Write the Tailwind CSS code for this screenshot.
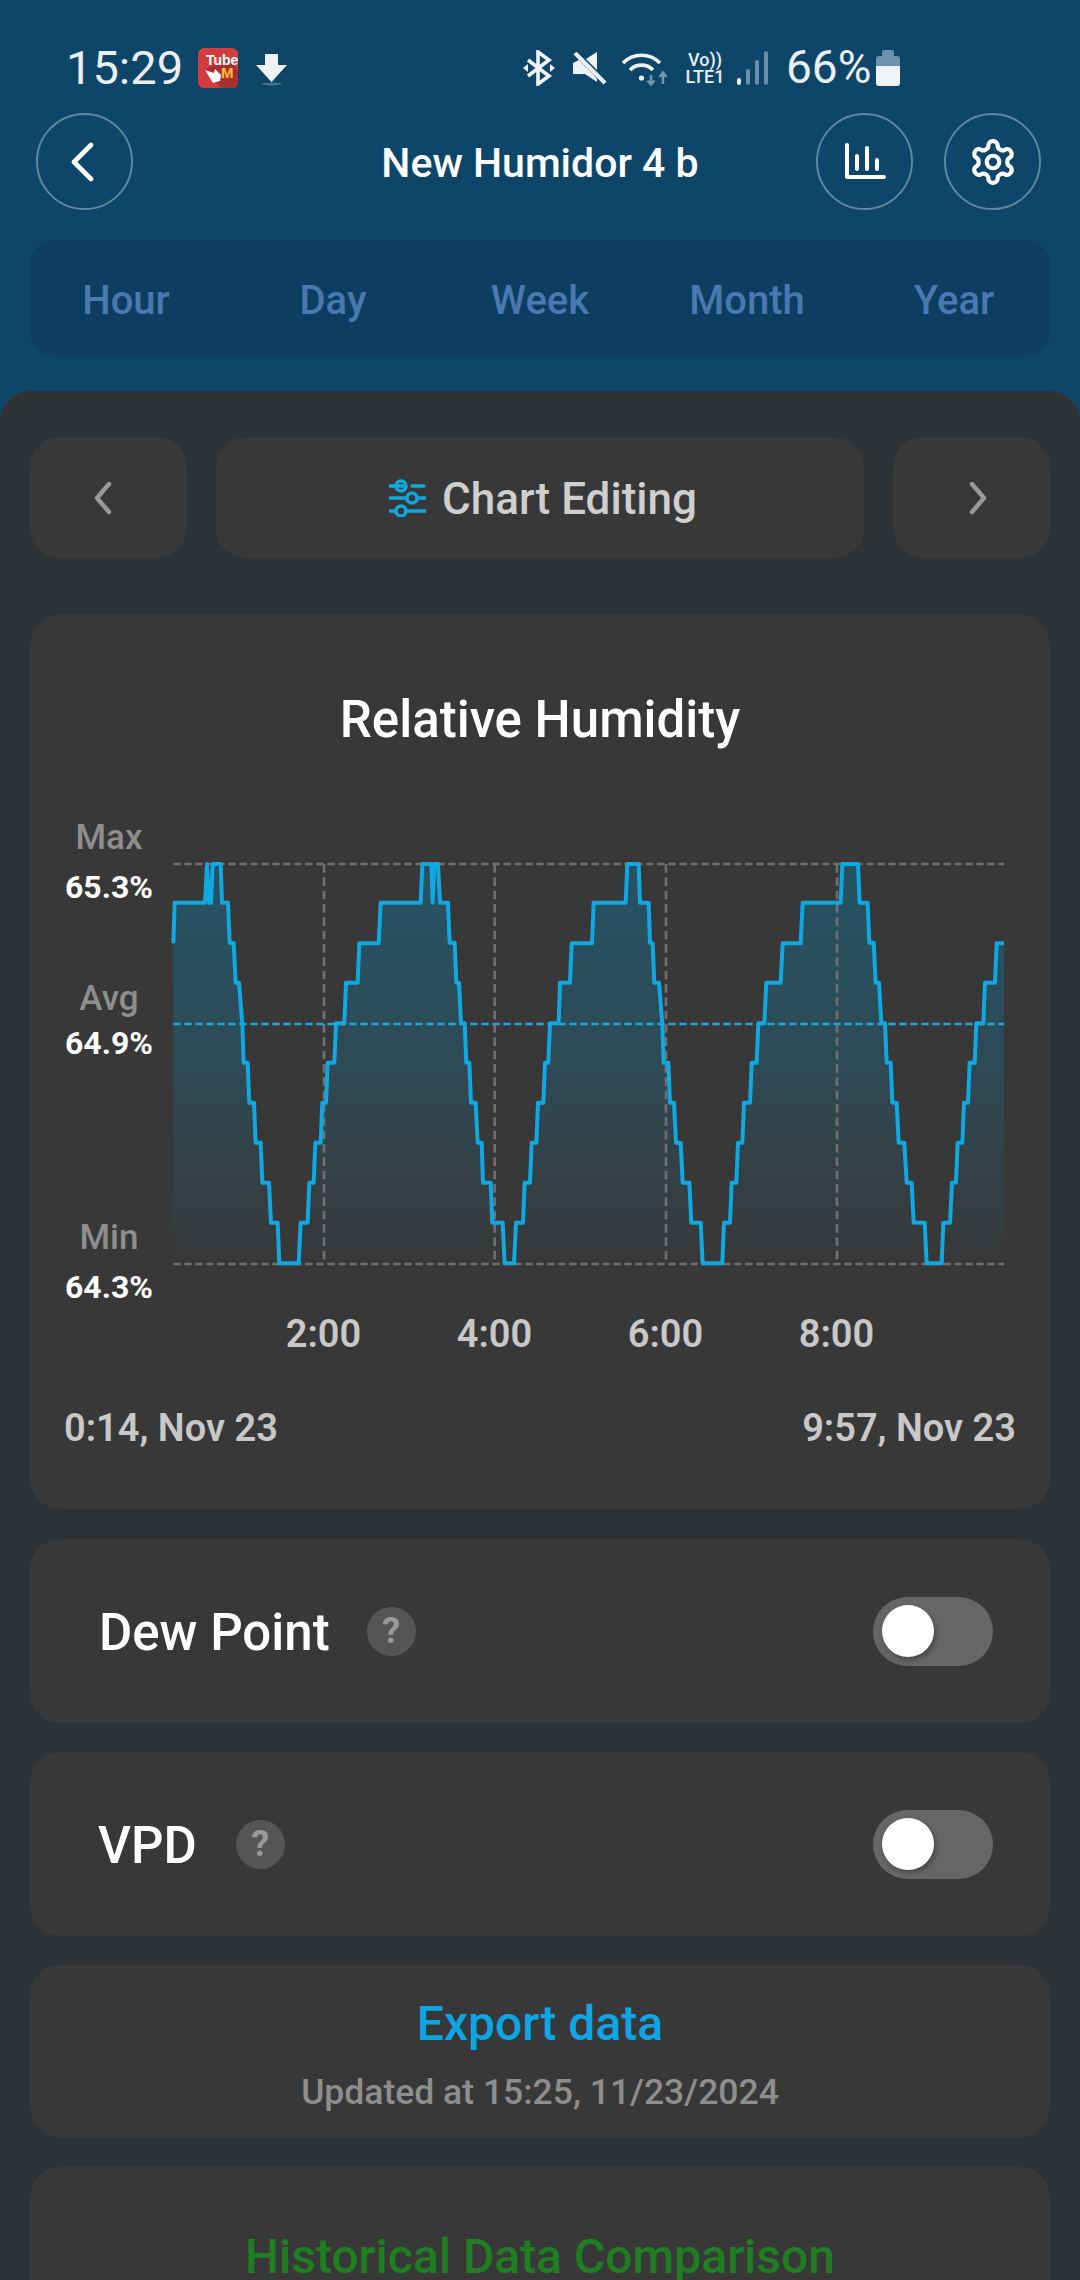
<!DOCTYPE html>
<html lang="en">
<head>
  <meta charset="UTF-8" />
  <title>New Humidor 4 b</title>
  <script src="https://cdn.jsdelivr.net/npm/@tailwindcss/browser@4"></script>
</head>
<body class="w-[1080px] h-[2280px] overflow-hidden bg-[#0e4669] font-['Roboto',sans-serif]">

  <!-- Status bar -->
  <div class="flex items-center h-[40px] mt-[48px] pl-[66px] text-[#e9eff4]">
    <span class="text-[47px] leading-none w-[132px] -mt-[2px]">15:29</span>
    <svg class="w-[40px] h-[40px]" viewBox="0 0 40 40">
      <rect width="40" height="40" rx="6" fill="#d33c3f" />
      <path d="M6 22 L20 36 L24 40 L34 40 Q40 40 40 34 L40 22 L30 10 Z" fill="#a92f33" />
      <path d="M7 22 L16 25 L17 21 L23 27 L22 33 L15 35 Z" fill="#fff" />
      <text x="8" y="17" font-size="14" font-weight="700" fill="#fff" font-family="Liberation Sans">Tube</text>
      <text x="23" y="30" font-size="15" font-weight="700" fill="#fbc02d" font-family="Liberation Sans">M</text>
    </svg>
    <svg class="w-[31px] h-[32px] ml-[18px] mt-[4px]" viewBox="0 0 31 32">
      <path d="M9 0 H22 V11 H31 L15.5 28 L0 11 H9 Z" fill="#eef3f7" />
      <ellipse cx="15.5" cy="30" rx="10" ry="1.5" fill="#eef3f7" opacity=".25" />
    </svg>

    <!-- Bluetooth -->
    <svg class="w-[32px] h-[36px] ml-[236px]" viewBox="0 0 32 36" fill="none" stroke="#eef3f7" stroke-width="3.6">
      <path d="M5 10 L26 26 L15 34 V2 L26 10 L5 26" />
      <path d="M0 18 L5 14 V22 Z M32 18 L27 14 V22 Z" fill="#eef3f7" stroke="none" />
    </svg>
    <!-- Mute -->
    <svg class="w-[35px] h-[33px] ml-[17px]" viewBox="0 0 35 33">
      <path d="M25 0 V18 L14 7 Z M7 8 L21 22 L25 27 V30 L13 22 H1 V11 Z" fill="#eef3f7" />
      <path d="M3 1 L33 31" stroke="#eef3f7" stroke-width="4" />
    </svg>
    <!-- Wifi -->
    <svg class="w-[48px] h-[35px] ml-[14px]" viewBox="0 0 48 35" fill="none">
      <path d="M2 12 A26 26 0 0 1 39 12" stroke="#eef3f7" stroke-width="3.6" />
      <path d="M9 19 A16 16 0 0 1 32 19" stroke="#eef3f7" stroke-width="3.6" />
      <circle cx="20.5" cy="27" r="2.6" fill="#eef3f7" />
      <path d="M30 24 V33 M26.5 29.5 L30 33.5 L33.5 29.5 M42 33 V22 M38.5 26 L42 21.5 L45.5 26" stroke="#7394ad" stroke-width="2.4" />
    </svg>
    <!-- VoLTE -->
    <div class="flex flex-col items-center w-[44px] ml-[14px] text-[18px] leading-[17px] font-medium">
      <span class="leading-[17px]">Vo))</span>
      <span class="leading-[17px]">LTE1</span>
    </div>
    <!-- Signal -->
    <svg class="w-[32px] h-[34px] ml-[10px]" viewBox="0 0 32 34">
      <rect x="0" y="27" width="4" height="7" rx="2" fill="#eef3f7" />
      <rect x="9" y="18" width="4" height="16" rx="2" fill="#6d8fa9" />
      <rect x="18" y="9" width="4" height="25" rx="2" fill="#6d8fa9" />
      <rect x="27" y="0" width="4" height="34" rx="2" fill="#6d8fa9" />
    </svg>
    <span class="text-[46px] leading-none ml-[17px] -mt-[2px]">66%</span>
    <svg class="w-[24px] h-[36px] ml-[5px]" viewBox="0 0 24 36">
      <path d="M6 6 V2 Q6 0 8 0 H16 Q18 0 18 2 V6 H21 Q24 6 24 9 V16 H0 V9 Q0 6 3 6 Z" fill="#6d93ae" />
      <path d="M0 16 H24 V33 Q24 36 21 36 H3 Q0 36 0 33 Z" fill="#eef3f7" />
    </svg>
  </div>

  <!-- Header -->
  <header class="grid grid-cols-[1fr_auto_1fr] items-center mt-[25px] pl-[39px] pr-[39px]">
    <button class="w-[97px] h-[97px] -ml-[3px] rounded-full border-2 border-[#5f87a1] flex items-center justify-center">
      <svg class="w-[24px] h-[40px] mr-[5px]" viewBox="0 0 24 40" fill="none" stroke="#fff" stroke-width="4.6" stroke-linecap="round" stroke-linejoin="round">
        <path d="M21 3 L4 20 L21 37" />
      </svg>
    </button>
    <h1 class="text-[41px] leading-none pt-[3px] font-medium text-white">New Humidor 4 b</h1>
    <div class="flex justify-end gap-[31px]">
      <button class="w-[97px] h-[97px] rounded-full border-2 border-[#5f87a1] flex items-center justify-center">
        <svg class="w-[42px] h-[37px]" viewBox="0 0 42 37" fill="none" stroke="#fff" stroke-width="4" stroke-linecap="round" stroke-linejoin="round">
          <path d="M3 2 V34 H40" />
          <path d="M13 13 V26 M23 5 V26 M33 17 V26" />
        </svg>
      </button>
      <button class="w-[97px] h-[97px] rounded-full border-2 border-[#5f87a1] flex items-center justify-center">
        <svg class="w-[50px] h-[50px]" viewBox="0 0 24 24" fill="none" stroke="#fff" stroke-width="2" stroke-linecap="round" stroke-linejoin="round">
          <path d="M12.22 2h-.44a2 2 0 0 0-2 2v.18a2 2 0 0 1-1 1.73l-.43.25a2 2 0 0 1-2 0l-.15-.08a2 2 0 0 0-2.73.73l-.22.38a2 2 0 0 0 .73 2.73l.15.1a2 2 0 0 1 1 1.72v.51a2 2 0 0 1-1 1.74l-.15.09a2 2 0 0 0-.73 2.73l.22.38a2 2 0 0 0 2.73.73l.15-.08a2 2 0 0 1 2 0l.43.25a2 2 0 0 1 1 1.73V20a2 2 0 0 0 2 2h.44a2 2 0 0 0 2-2v-.18a2 2 0 0 1 1-1.73l.43-.25a2 2 0 0 1 2 0l.15.08a2 2 0 0 0 2.73-.73l.22-.39a2 2 0 0 0-.73-2.73l-.15-.08a2 2 0 0 1-1-1.74v-.5a2 2 0 0 1 1-1.74l.15-.09a2 2 0 0 0 .73-2.73l-.22-.38a2 2 0 0 0-2.73-.73l-.15.08a2 2 0 0 1-2 0l-.43-.25a2 2 0 0 1-1-1.73V4a2 2 0 0 0-2-2z" />
          <circle cx="12" cy="12" r="3" />
        </svg>
      </button>
    </div>
  </header>

  <!-- Period tabs -->
  <nav class="flex justify-center items-center h-[116px] pt-[5px] mx-[30px] mt-[30px] rounded-[24px] bg-[#0d3e62] text-[40px] leading-none font-medium text-[#4a78b0]">
    <span class="w-[207px] shrink-0 text-center">Hour</span>
    <span class="w-[207px] shrink-0 text-center">Day</span>
    <span class="w-[207px] shrink-0 text-center">Week</span>
    <span class="w-[207px] shrink-0 text-center">Month</span>
    <span class="w-[207px] shrink-0 text-center">Year</span>
  </nav>

  <!-- Main panel -->
  <main class="mt-[35px] h-[1889px] pt-[46px] px-[30px] rounded-t-[30px] bg-[#2f3235]">

    <!-- Chart navigation -->
    <div class="flex gap-[29px] h-[121px]">
      <button class="w-[157px] rounded-[30px] bg-[#383838] flex items-center justify-center">
        <svg class="w-[22px] h-[34px] mr-[12px]" viewBox="0 0 22 34" fill="none" stroke="#999" stroke-width="4.4" stroke-linecap="round" stroke-linejoin="round">
          <path d="M17 3 L5 17 L17 31" />
        </svg>
      </button>
      <button class="flex-1 pl-[6px] rounded-[30px] bg-[#383838] flex items-center justify-center gap-[16px]">
        <svg class="w-[37px] h-[38px]" viewBox="0 0 37 38" fill="none" stroke="#10a8e0" stroke-width="3.4" stroke-linecap="round">
          <path d="M1 7 H17 M23 7 H35 M1 19 H18 M29 19 H36 M1 32 H7 M18 32 H36" />
          <circle cx="12" cy="7" r="5" />
          <circle cx="23" cy="19" r="5" />
          <circle cx="12" cy="32" r="5" />
        </svg>
        <span class="text-[44px] leading-none pt-[3px] font-medium text-[#cfcfcf]">Chart Editing</span>
      </button>
      <button class="w-[157px] rounded-[30px] bg-[#383838] flex items-center justify-center">
        <svg class="w-[22px] h-[34px] ml-[12px]" viewBox="0 0 22 34" fill="none" stroke="#999" stroke-width="4.4" stroke-linecap="round" stroke-linejoin="round">
          <path d="M5 3 L17 17 L5 31" />
        </svg>
      </button>
    </div>

    <!-- Chart card -->
    <section class="mt-[56px] h-[895px] pt-[76px] rounded-[30px] bg-[#383838]">
      <h2 class="h-[60px] leading-[60px] text-center text-[51px] font-medium text-white">Relative Humidity</h2>

      <div class="flex mt-[67px] h-[490px]">
        <div class="w-[118px] ml-[20px] flex flex-col items-center">
          <span class="h-[40px] leading-[40px] mt-[1px] text-[35px] font-medium text-[#8e8e8e]">Max</span>
          <span class="h-[40px] leading-[40px] mt-[9px] text-[32px] font-bold text-white">65.3%</span>
          <span class="h-[40px] leading-[40px] mt-[72px] text-[35px] font-medium text-[#8e8e8e]">Avg</span>
          <span class="h-[40px] leading-[40px] mt-[4px] text-[32px] font-bold text-white">64.9%</span>
          <span class="h-[40px] leading-[40px] mt-[155px] text-[35px] font-medium text-[#8e8e8e]">Min</span>
          <span class="h-[40px] leading-[40px] mt-[9px] text-[32px] font-bold text-white">64.3%</span>
        </div>

        <!-- units are a third of a pixel -->
        <svg class="w-[836px] h-[408px] ml-[2px] mt-[43px]" viewBox="30 60 2508 1224" fill="none">
          <defs>
            <linearGradient id="area" gradientUnits="userSpaceOnUse" x1="0" y1="72" x2="0" y2="1272">
              <stop offset="0" stop-color="#255364" />
              <stop offset="0.5" stop-color="#2e4a56" />
              <stop offset="1" stop-color="#383838" />
            </linearGradient>
          </defs>

          <polygon fill="url(#area)" points="40,1272 40,310 44,188 135,188 141,72 147,188 153,188 158,72 182,72 186,188 204,188 209,308 221,310 227,428 237,428 247,552 251,668 263,668 268,788 282,788 287,908 302,908 307,1028 327,1028 333,1148 353,1148 358,1270 416,1270 422,1148 443,1148 448,1028 461,1028 466,908 482,908 487,788 498,788 503,668 523,668 528,550 553,550 558,428 593,428 598,310 656,310 662,188 782,188 787,72 814,72 818,188 823,72 834,72 840,188 864,188 869,308 884,308 889,428 897,428 903,550 914,550 919,668 928,668 933,788 947,788 953,908 965,908 969,1028 992,1028 997,1148 1028,1148 1034,1270 1062,1270 1068,1148 1089,1148 1094,1028 1110,1028 1115,908 1129,908 1134,788 1150,788 1155,668 1165,668 1170,550 1196,550 1200,428 1230,428 1235,310 1260,310 1260,1272" />
          <polygon fill="url(#area)" transform="translate(1260 0)" points="0,1272 0,310 36,310 41,188 137,188 142,72 176,72 180,188 206,188 210,308 218,310 223,428 237,428 247,552 251,668 265,668 270,788 282,788 288,908 302,908 308,1028 328,1028 334,1148 362,1148 368,1270 427,1270 432,1148 450,1148 455,1028 469,1028 474,908 487,908 492,788 510,788 515,668 530,668 535,550 553,550 559,428 602,428 608,310 662,310 668,188 782,188 787,72 834,72 839,188 863,188 868,308 881,308 887,428 897,428 904,550 915,550 920,668 932,668 937,788 950,788 956,908 973,908 980,1028 995,1028 1001,1148 1034,1148 1040,1270 1085,1270 1090,1148 1110,1148 1116,1028 1128,1028 1133,908 1147,908 1152,788 1164,788 1169,668 1184,668 1189,550 1210,550 1215,428 1245,428 1250,310 1272,310 1272,1272" />

          <g stroke="#6f6f6f" stroke-width="8">
            <path d="M40 72 H2532 M40 1272 H2532" stroke-dasharray="22 11" />
            <path d="M492 72 V1272 M1004 72 V1272 M1518 72 V1272 M2031 72 V1272" stroke-dasharray="26 14" />
          </g>
          <path d="M40 552 H2532" stroke="#1ea7dc" stroke-width="8" stroke-dasharray="22 11" />

          <g stroke="#10a8e0" stroke-width="12" stroke-linejoin="round">
            <polyline points="40,310 44,188 135,188 141,72 147,188 153,188 158,72 182,72 186,188 204,188 209,308 221,310 227,428 237,428 247,552 251,668 263,668 268,788 282,788 287,908 302,908 307,1028 327,1028 333,1148 353,1148 358,1270 416,1270 422,1148 443,1148 448,1028 461,1028 466,908 482,908 487,788 498,788 503,668 523,668 528,550 553,550 558,428 593,428 598,310 656,310 662,188 782,188 787,72 814,72 818,188 823,72 834,72 840,188 864,188 869,308 884,308 889,428 897,428 903,550 914,550 919,668 928,668 933,788 947,788 953,908 965,908 969,1028 992,1028 997,1148 1028,1148 1034,1270 1062,1270 1068,1148 1089,1148 1094,1028 1110,1028 1115,908 1129,908 1134,788 1150,788 1155,668 1165,668 1170,550 1196,550 1200,428 1230,428 1235,310 1260,310" />
            <polyline transform="translate(1260 0)" points="0,310 36,310 41,188 137,188 142,72 176,72 180,188 206,188 210,308 218,310 223,428 237,428 247,552 251,668 265,668 270,788 282,788 288,908 302,908 308,1028 328,1028 334,1148 362,1148 368,1270 427,1270 432,1148 450,1148 455,1028 469,1028 474,908 487,908 492,788 510,788 515,668 530,668 535,550 553,550 559,428 602,428 608,310 662,310 668,188 782,188 787,72 834,72 839,188 863,188 868,308 881,308 887,428 897,428 904,550 915,550 920,668 932,668 937,788 950,788 956,908 973,908 980,1028 995,1028 1001,1148 1034,1148 1040,1270 1085,1270 1090,1148 1110,1148 1116,1028 1128,1028 1133,908 1147,908 1152,788 1164,788 1169,668 1184,668 1189,550 1210,550 1215,428 1245,428 1250,310 1272,310" />
          </g>
        </svg>
      </div>

      <div class="flex mt-[7px] pl-[208px] text-[38px] leading-[40px] font-semibold text-[#c8c8c8]">
        <span class="w-[171px] text-center">2:00</span>
        <span class="w-[171px] text-center">4:00</span>
        <span class="w-[171px] text-center">6:00</span>
        <span class="w-[171px] text-center">8:00</span>
      </div>

      <div class="flex justify-between mt-[54px] px-[34px] text-[38px] leading-[40px] font-semibold text-[#c8c8c8]">
        <span>0:14, Nov 23</span>
        <span>9:57, Nov 23</span>
      </div>
    </section>

    <!-- Dew Point -->
    <section class="flex items-center mt-[30px] h-[184px] pl-[69px] pr-[57px] rounded-[30px] bg-[#383838]">
      <span class="text-[51px] leading-none pt-[3px] font-medium text-white">Dew Point</span>
      <span class="w-[49px] h-[49px] ml-[37px] rounded-full bg-[#555] flex items-center justify-center text-[36px] font-bold leading-none text-[#999]">?</span>
      <div class="ml-auto w-[120px] h-[69px] pl-[9px] rounded-full bg-[#666] flex items-center">
        <div class="w-[52px] h-[52px] rounded-full bg-white shadow-[2px_3px_5px_rgba(0,0,0,0.3)]"></div>
      </div>
    </section>

    <!-- VPD -->
    <section class="flex items-center mt-[29px] h-[184px] pl-[68px] pr-[57px] rounded-[30px] bg-[#383838]">
      <span class="text-[51px] leading-none pt-[3px] font-medium text-white">VPD</span>
      <span class="w-[49px] h-[49px] ml-[39px] rounded-full bg-[#555] flex items-center justify-center text-[36px] font-bold leading-none text-[#999]">?</span>
      <div class="ml-auto w-[120px] h-[69px] pl-[9px] rounded-full bg-[#666] flex items-center">
        <div class="w-[52px] h-[52px] rounded-full bg-white shadow-[2px_3px_5px_rgba(0,0,0,0.3)]"></div>
      </div>
    </section>

    <!-- Export -->
    <section class="mt-[29px] h-[173px] pt-[34px] rounded-[30px] bg-[#383838] text-center">
      <p class="h-[50px] leading-[50px] text-[48px] font-medium text-[#0ea5e4]">Export data</p>
      <p class="h-[40px] leading-[40px] mt-[23px] text-[35.5px] font-medium text-[#8e8e8e]">Updated at 15:25, 11/23/2024</p>
    </section>

    <!-- Historical -->
    <section class="mt-[29px] h-[200px] pt-[65px] rounded-[30px] bg-[#383838] text-center">
      <p class="h-[50px] leading-[50px] text-[48px] font-medium text-[#1f7d22]">Historical Data Comparison</p>
    </section>
  </main>
</body>
</html>
